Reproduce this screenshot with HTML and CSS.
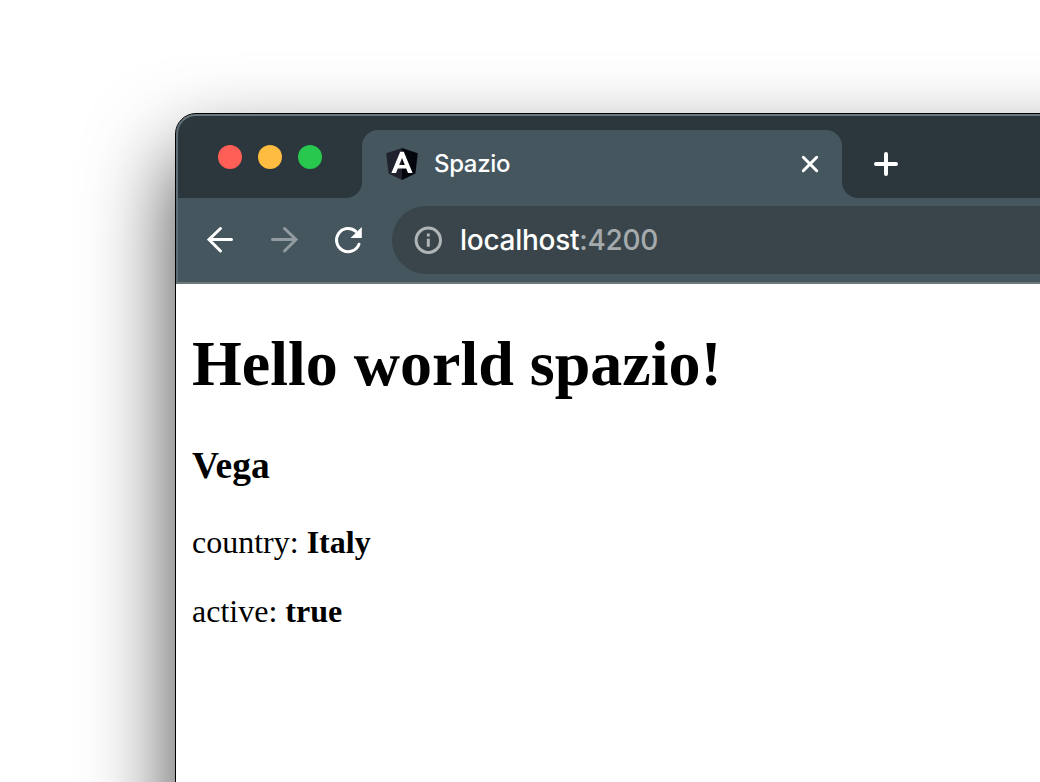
FILE: index.html
```
<!DOCTYPE html>
<html lang="en">
<head>
<meta charset="utf-8">
<title>Spazio</title>
<link rel="stylesheet" href="styles.css">
</head>
<body>
<div class="window">
  <header class="chrome">
    <div class="tabstrip">
      <div class="lights"><span class="light close"></span><span class="light minimize"></span><span class="light expand"></span></div>
      <div class="tab">
        <svg class="favicon" viewBox="0 0 32 32"><path fill="#20232d" d="M16 0 0.2 5.2 2.6 25.4 16 32z"/><path fill="#04060e" d="M16 0 31.8 5.2 29.4 25.4 16 32z"/><path fill="#fff" fill-rule="evenodd" d="M14.2 3.8H17.8L26.6 25H22L20.2 20.4H11.8L10 25H5.4zM16 10 18.8 16.9H13.2z"/></svg>
        <span class="tab-title">Spazio</span>
        <svg class="tab-close" viewBox="0 0 20 20"><path d="M3.3 3.3 16.7 16.7M16.7 3.3 3.3 16.7"/></svg>
      </div>
      <svg class="new-tab" viewBox="0 0 28 28"><path d="M14 4V24M4 14H24"/></svg>
    </div>
    <div class="toolbar">
      <svg class="nav" viewBox="0 0 32 32"><path d="M27.5 15.5H5M16.5 4.5 5 15.5 16.5 27"/></svg>
      <svg class="nav disabled" viewBox="0 0 32 32"><path d="M4.5 15.5H27M16.5 4.5 28 15.5 16.5 27"/></svg>
      <svg class="nav" viewBox="0 0 32 32"><path d="M27 20.2A11.6 11.6 0 1 1 23.8 7.4"/><path class="solid" d="M29.8 3V14H18.5z"/></svg>
      <div class="omnibox">
        <svg class="info" viewBox="0 0 28 28"><circle cx="14.3" cy="14.3" r="12.2"/><path d="M14.3 12.8V20.8M14.3 7.6V10.4"/></svg>
        <span class="url">localhost<span class="port">:4200</span></span>
      </div>
    </div>
  </header>
  <main class="page">
    <h1>Hello world spazio!</h1>
    <h3>Vega</h3>
    <p>country: <b>Italy</b></p>
    <p>active: <b>true</b></p>
  </main>
</div>
</body>
</html>
```
FILE: styles.css
```
* { box-sizing: border-box; }
body { margin: 0; height: 782px; padding: 113px 0 0 175px; background: #fff; overflow: hidden; }
.window { width: 1600px; height: 1100px; border: 1px solid #000; border-radius: 21px; background: #fff; box-shadow: 0 42px 86px rgba(0,0,0,.74); }
.chrome { position: relative; height: 170px; border-radius: 20px 20px 0 0; overflow: hidden; background: #45565f; font-family: Inter, "Liberation Sans", sans-serif; color: #fff; }
.chrome::after { content: ""; position: absolute; inset: 0; border: 2px solid #6b787e; border-left-color: #5f6e76; border-radius: 20px 20px 0 0; }
.tabstrip { display: flex; height: 84px; background: linear-gradient(#2b373d 0 50px, #45565f 50px); }
.lights { display: flex; gap: 16px; width: 186px; padding: 31px 0 0 42px; background: #2b373d; border-bottom-right-radius: 16px; }
.light { width: 24px; height: 24px; border-radius: 50%; }
.close { background: #ff5f57; }
.minimize { background: #febc40; }
.expand { background: #28c84f; }
.tab { display: flex; align-items: center; width: 480px; height: 68px; margin-top: 16px; padding: 0 22px 0 24px; background: #45565f; border-radius: 16px 16px 0 0; }
.favicon { width: 32px; height: 32px; }
.tab-title { flex: 1; margin-left: 16px; font-size: 24px; font-weight: 500; letter-spacing: -.35px; line-height: 32px; }
.tab-close { width: 20px; height: 20px; }
.new-tab { width: 858px; flex: none; height: 84px; padding: 36px 800px 20px 30px; background: #2b373d; border-bottom-left-radius: 16px; }
svg { display: block; fill: none; stroke: #fff; stroke-width: 3; stroke-linecap: round; }
.favicon path { stroke: none; }
.new-tab { stroke-width: 4; }
.toolbar { display: flex; align-items: center; height: 84px; padding-left: 28px; }
.nav { width: 32px; height: 32px; margin-right: 32px; stroke-width: 3; }
.disabled { stroke: #929b9f; }
.solid { fill: #fff; stroke: none; }
.omnibox { display: flex; flex: 1; align-items: center; height: 68px; margin-left: -4px; padding-left: 22px; border-radius: 34px; background: #39454a; }
.info { width: 28px; height: 28px; stroke: #b0b5b7; stroke-linecap: butt; overflow: visible; }
.url { margin-left: 18px; font-size: 28px; font-weight: 500; letter-spacing: -.28px; line-height: 36px; }
.port { color: #a5abad; }
.page { padding: 0 16px; font-family: "Liberation Serif", serif; font-size: 32px; line-height: 37px; color: #000; }
h1 { margin: 43px 0; font-size: 64px; line-height: 74px; }
h3 { margin: 0 0 37px; font-size: 37.44px; line-height: 43px; }
p { margin: 0 0 32px; }
```
